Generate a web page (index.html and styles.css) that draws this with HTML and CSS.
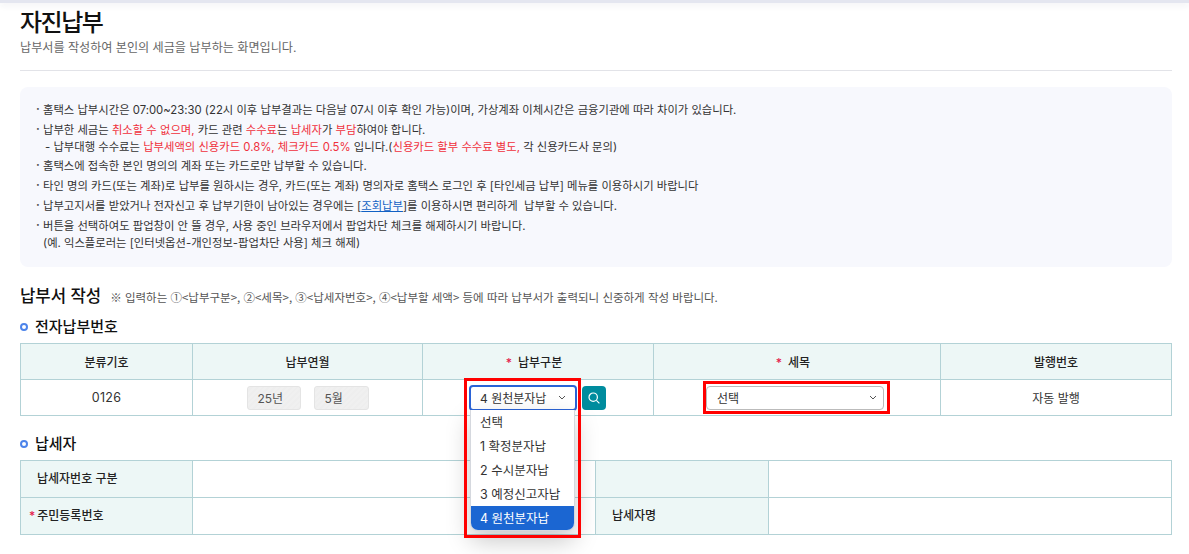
FILE: index.html
```html
<!DOCTYPE html>
<html lang="ko">
<head>
<meta charset="utf-8">
<title>자진납부</title>
<link rel="stylesheet" href="styles.css">
</head>
<body>
<div class="topbar"></div>
<main class="page">
  <header class="head">
    <h1>자진납부</h1>
    <p>납부서를 작성하여 본인의 세금을 납부하는 화면입니다.</p>
  </header>
  <section class="notice">
    <ul>
      <li>홈택스 납부시간은 07:00~23:30 (22시 이후 납부결과는 다음날 07시 이후 확인 가능)이며, 가상계좌 이체시간은 금융기관에 따라 차이가 있습니다.</li>
      <li class="tight">납부한 세금는 <b>취소할 수 없으며,</b> 카드 관련 <b>수수료</b>는 <b>납세자</b>가 <b>부담</b>하여야 합니다.<br><span class="dash">- 납부대행 수수료는 <b>납부세액의 신용카드 0.8%, 체크카드 0.5%</b> 입니다.(<b>신용카드 할부 수수료 별도,</b> 각 신용카드사 문의)</span></li>
      <li>홈택스에 접속한 본인 명의의 계좌 또는 카드로만 납부할 수 있습니다.</li>
      <li>타인 명의 카드(또는 계좌)로 납부를 원하시는 경우, 카드(또는 계좌) 명의자로 홈택스 로그인 후 [타인세금 납부] 메뉴를 이용하시기 바랍니다</li>
      <li>납부고지서를 받았거나 전자신고 후 납부기한이 남아있는 경우에는 [<a href="#">조회납부</a>]를 이용하시면 편리하게&nbsp; 납부할 수 있습니다.</li>
      <li class="tight">버튼을 선택하여도 팝업창이 안 뜰 경우, 사용 중인 브라우저에서 팝업차단 체크를 해제하시기 바랍니다.<br>(예. 익스플로러는 [인터넷옵션-개인정보-팝업차단 사용] 체크 해제)</li>
    </ul>
  </section>
  <div class="formhead">
    <h2>납부서 작성</h2>
    <span>※ 입력하는 ①&lt;납부구분&gt;, ②&lt;세목&gt;, ③&lt;납세자번호&gt;, ④&lt;납부할 세액&gt; 등에 따라 납부서가 출력되니 신중하게 작성 바랍니다.</span>
  </div>
  <h3 class="sub first">전자납부번호</h3>
  <table class="grid one">
    <colgroup><col class="c1"><col class="c2"><col class="c3"><col class="c4"><col></colgroup>
    <tr>
      <th>분류기호</th><th>납부연월</th><th class="req"><i>*</i>납부구분</th><th class="req"><i>*</i>세목</th><th>발행번호</th>
    </tr>
    <tr>
      <td class="code">0126</td>
      <td><div class="dates"><span class="ro w1">25년</span><span class="ro w2">5월</span></div></td>
      <td class="anchor">
        <div class="pick">
          <div class="sel open">4 원천분자납<svg width="8" height="5" viewBox="0 0 8 5"><path d="M1 1l3 3 3-3" fill="none" stroke="#555" stroke-width="1"/></svg></div>
          <button class="search" type="button" aria-label="검색"><svg width="14" height="14" viewBox="0 0 14 14"><circle cx="6.2" cy="6.2" r="4.2" fill="none" stroke="#fff" stroke-width="1.2"/><path d="M9.4 9.4l3 3" stroke="#fff" stroke-width="1.2"/></svg></button>
        </div>
        <ul class="menu">
          <li>선택</li><li>1 확정분자납</li><li>2 수시분자납</li><li>3 예정신고자납</li><li class="on">4 원천분자납</li>
        </ul>
        <div class="mark tall"></div>
      </td>
      <td class="anchor">
        <div class="sel wide">선택<svg width="8" height="5" viewBox="0 0 8 5"><path d="M1 1l3 3 3-3" fill="none" stroke="#555" stroke-width="1"/></svg></div>
        <div class="mark short"></div>
      </td>
      <td>자동 발행</td>
    </tr>
  </table>
  <h3 class="sub second">납세자</h3>
  <table class="grid two">
    <colgroup><col class="c1"><col class="d2"><col class="d3"><col></colgroup>
    <tr><th class="left pad">납세자번호 구분</th><td></td><th></th><td></td></tr>
    <tr><th class="left"><i class="near">*</i>주민등록번호</th><td></td><th class="left name">납세자명</th><td></td></tr>
  </table>
</main>
</body>
</html>
```
FILE: styles.css
```css
* { box-sizing: border-box; }
html, body { margin: 0; padding: 0; height: 554px; overflow: hidden; background: #fff; }
body { font-family: Inter, "Noto Sans CJK KR", "Noto Sans", sans-serif; color: #333; font-size: 12px; }
.topbar { height: 3px; background: #e4e6f0; box-shadow: 0 2px 6px rgba(40,50,90,.10); }
.page { padding: 0 17px 0 20px; }
.head { height: 68px; border-bottom: 1px solid #e2e3e8; }
.head h1 { margin: 0; padding-top: 5px; font-size: 24px; line-height: 30px; font-weight: 500; letter-spacing: -1.5px; color: #111; }
.head p { margin: 1px 0 0; font-size: 12.1px; line-height: 18px; color: #666; }
.notice { margin-top: 16px; height: 180px; background: #f7f8fd; border-radius: 8px; padding: 15px 16px 0; }
.notice ul { margin: 0; padding: 0; list-style: none; }
.notice li { position: relative; padding-left: 7px; line-height: 17px; margin-bottom: 3px; font-size: 11.33px; color: #333; }
.notice li::before { content: "·"; position: absolute; left: 0; top: -1px; color: #555; font-weight: 700; }
.notice li.tight { line-height: 16.5px; }
.notice b { font-weight: 400; color: #f0303c; }
.notice a { color: #1261c4; }
.dash { padding-left: 2px; }
.formhead { display: flex; align-items: baseline; gap: 9px; margin-top: 18px; height: 22px; }
.formhead h2 { margin: 0; font-size: 16.7px; line-height: 22px; font-weight: 500; color: #111; }
.formhead span { font-family: "Noto Sans CJK KR", sans-serif; font-size: 11.5px; color: #555; }
.sub { display: flex; align-items: center; font-size: 15px; line-height: 21px; font-weight: 500; color: #111; }
.sub::before { content: ""; box-sizing: border-box; width: 8px; height: 8px; margin-right: 7px; border: 2.5px solid #4d84ea; border-radius: 50%; }
.sub.first { margin: 9px 0 6px; }
.sub.second { margin: 17px 0 6px; }
.grid { width: 100%; border-collapse: collapse; table-layout: fixed; border: 1px solid #b3d2d6; }
.grid th, .grid td { border: 1px solid #b3d2d6; padding: 0; text-align: center; font-size: 12px; }
.grid th { background: #edf7f6; font-weight: 500; color: #222; }
.grid td { color: #333; background: #fff; }
.grid td.code { font-size: 12.5px; letter-spacing: .3px; }
.c1 { width: 172px; }
.c2 { width: 230px; }
.c3 { width: 231px; }
.c4 { width: 287px; }
.d2 { width: 403px; }
.d3 { width: 173px; }
.one tr { height: 36px; }
.two tr { height: 37px; }
.two th { padding-bottom: 3px; }
.grid th.req { padding-right: 8px; }
.grid i { font-style: normal; color: #e5204c; margin-right: 6px; }
.grid i.near { margin-right: 2px; }
.grid th.left { text-align: left; padding-left: 8px; }
.grid th.pad { padding-left: 16px; }
.grid th.name { padding-left: 16px; }
.dates { display: flex; justify-content: center; gap: 13px; }
.ro { display: flex; align-items: center; height: 24px; padding-left: 10px; background: repeating-linear-gradient(135deg, #f0f0f0 0 2px, #eeeeee 2px 4px); border: 1px solid #e4e4e4; border-radius: 3px; color: #555; }
.w1 { width: 54px; }
.w2 { width: 55px; }
.anchor { position: relative; }
.pick { display: flex; align-items: center; gap: 5px; padding-left: 46px; }
.sel { display: flex; align-items: center; justify-content: space-between; height: 25px; padding: 0 6px 0 10px; background: #fff; border: 1px solid #bbb; border-radius: 4px; color: #333; text-align: left; }
.sel.open { width: 108px; height: 26px; border: 2px solid #2a63d6; padding: 0 9px 0 9px; box-shadow: inset 0 0 0 1px #fff; }
.sel.wide { width: 178px; margin-left: 52px; height: 24px; }
.search { display: flex; align-items: center; justify-content: center; width: 24px; height: 24px; padding: 0; border: 0; border-radius: 4px; background: #008c9e; }
.menu { position: absolute; left: 47px; top: 30px; z-index: 2; width: 105px; margin: 0; padding: 0; list-style: none; background: #fff; border: 1px solid #d5d8de; border-top: 0; border-radius: 0 0 8px 8px; overflow: hidden; box-shadow: 0 10px 24px rgba(0,0,0,.22); }
.menu li { height: 24px; line-height: 26px; padding-left: 9px; text-align: left; font-size: 12.5px; color: #333; }
.menu li.on { background: #1b66d2; color: #fff; }
.mark { position: absolute; z-index: 3; border: 3px solid #f00; pointer-events: none; }
.mark.tall { left: 41px; top: -2px; width: 117px; height: 160px; }
.mark.short { left: 49px; top: 1px; width: 187px; height: 33px; }
```
